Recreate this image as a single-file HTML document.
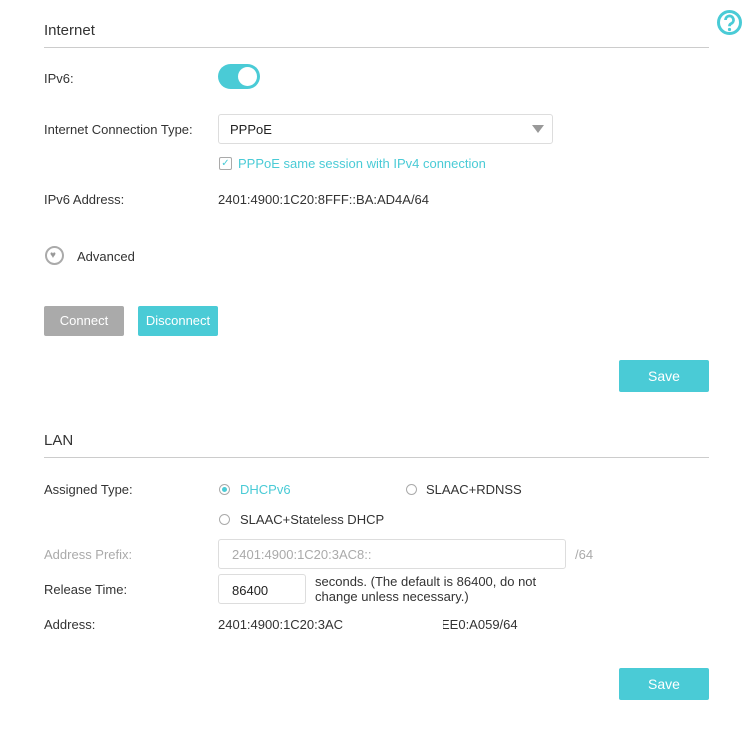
<!DOCTYPE html>
<html><head><style>
body{margin:0;width:747px;height:742px;background:#fff;font-family:"Liberation Sans",sans-serif;font-size:13px;color:#333;position:relative;overflow:hidden}
.a{position:absolute;white-space:nowrap}
.h{font-size:15px;color:#333}
.line{position:absolute;left:44px;width:665px;height:1px;background:#ccc}
.btn{position:absolute;color:#fff;text-align:center;border-radius:2px}
.inp{position:absolute;border:1px solid #ddd;border-radius:3px;box-sizing:border-box;background:#fff}
.radio{position:absolute;width:11px;height:11px;border:1px solid #aaa;border-radius:50%;box-sizing:border-box}
</style></head><body>
<svg class="a" style="left:716px;top:9px" width="27" height="27" viewBox="0 0 27 27"><circle cx="13.5" cy="13.5" r="11" fill="none" stroke="#4acbd6" stroke-width="3"/><path d="M9.5 11a4 4 0 1 1 5.6 3.6c-1.3.6-1.6 1.3-1.6 2.6" fill="none" stroke="#4acbd6" stroke-width="2.8"/><circle cx="13.5" cy="20.5" r="1.6" fill="#4acbd6"/></svg>
<div class="a h" style="left:44px;top:22px">Internet</div>
<div class="line" style="top:47px"></div>
<div class="a" style="left:44px;top:71px">IPv6:</div>
<div class="a" style="left:218px;top:64px;width:42px;height:25px;border-radius:13px;background:#4acbd6"><div style="position:absolute;right:3px;top:3px;width:19px;height:19px;border-radius:50%;background:#fff"></div></div>
<div class="a" style="left:44px;top:122px">Internet Connection Type:</div>
<div class="inp" style="left:218px;top:114px;width:335px;height:30px"><span class="a" style="left:11px;top:7px;color:#222">PPPoE</span><span class="a" style="right:8px;top:10px;width:0;height:0;border-left:6px solid transparent;border-right:6px solid transparent;border-top:8px solid #999"></span></div>
<div class="a" style="left:219px;top:157px;width:11px;height:11px;border:1px solid #aaa;border-radius:2px;color:#4acbd6;font-size:10px;line-height:11px;text-align:center">✓</div>
<div class="a" style="left:238px;top:156px;color:#4acbd6">PPPoE same session with IPv4 connection</div>
<div class="a" style="left:44px;top:192px">IPv6 Address:</div>
<div class="a" style="left:218px;top:192px">2401:4900:1C20:8FFF::BA:AD4A/64</div>
<div class="a" style="left:45px;top:246px;width:19px;height:19px;border:2px solid #aaa;border-radius:50%;box-sizing:border-box"><div style="position:absolute;left:3px;top:2px;font-size:10px;color:#999">♥</div></div>
<div class="a" style="left:77px;top:249px">Advanced</div>
<div class="btn" style="left:44px;top:306px;width:80px;height:30px;line-height:30px;background:#aaa">Connect</div>
<div class="btn" style="left:138px;top:306px;width:80px;height:30px;line-height:30px;background:#4acbd6">Disconnect</div>
<div class="btn" style="left:619px;top:360px;width:90px;height:32px;line-height:32px;background:#4acbd6;font-size:14px">Save</div>
<div class="a h" style="left:44px;top:432px">LAN</div>
<div class="line" style="top:457px"></div>
<div class="a" style="left:44px;top:482px">Assigned Type:</div>
<div class="radio" style="left:219px;top:484px;border-color:#aaa"><div style="position:absolute;left:2px;top:2px;width:5px;height:5px;border-radius:50%;background:#4acbd6"></div></div>
<div class="a" style="left:240px;top:482px;color:#4acbd6">DHCPv6</div>
<div class="radio" style="left:406px;top:484px"></div>
<div class="a" style="left:426px;top:482px">SLAAC+RDNSS</div>
<div class="radio" style="left:219px;top:514px"></div>
<div class="a" style="left:240px;top:512px">SLAAC+Stateless DHCP</div>
<div class="a" style="left:44px;top:547px;color:#aaa">Address Prefix:</div>
<div class="inp" style="left:218px;top:539px;width:348px;height:30px"><span class="a" style="left:13px;top:7px;color:#aaa">2401:4900:1C20:3AC8::</span></div>
<div class="a" style="left:575px;top:547px;color:#aaa">/64</div>
<div class="a" style="left:44px;top:582px">Release Time:</div>
<div class="inp" style="left:218px;top:574px;width:88px;height:30px"><span class="a" style="left:13px;top:8px;color:#222">86400</span></div>
<div class="a" style="left:315px;top:574px;line-height:15px">seconds. (The default is 86400, do not<br>change unless necessary.)</div>
<div class="a" style="left:44px;top:617px">Address:</div>
<div class="a" style="left:218px;top:617px">2401:4900:1C20:3AC</div>
<div class="a" style="left:441px;top:617px">EE0:A059/64</div>
<div class="a" style="left:436px;top:614px;width:7px;height:18px;background:#fff"></div>
<div class="btn" style="left:619px;top:668px;width:90px;height:32px;line-height:32px;background:#4acbd6;font-size:14px">Save</div>
</body></html>
